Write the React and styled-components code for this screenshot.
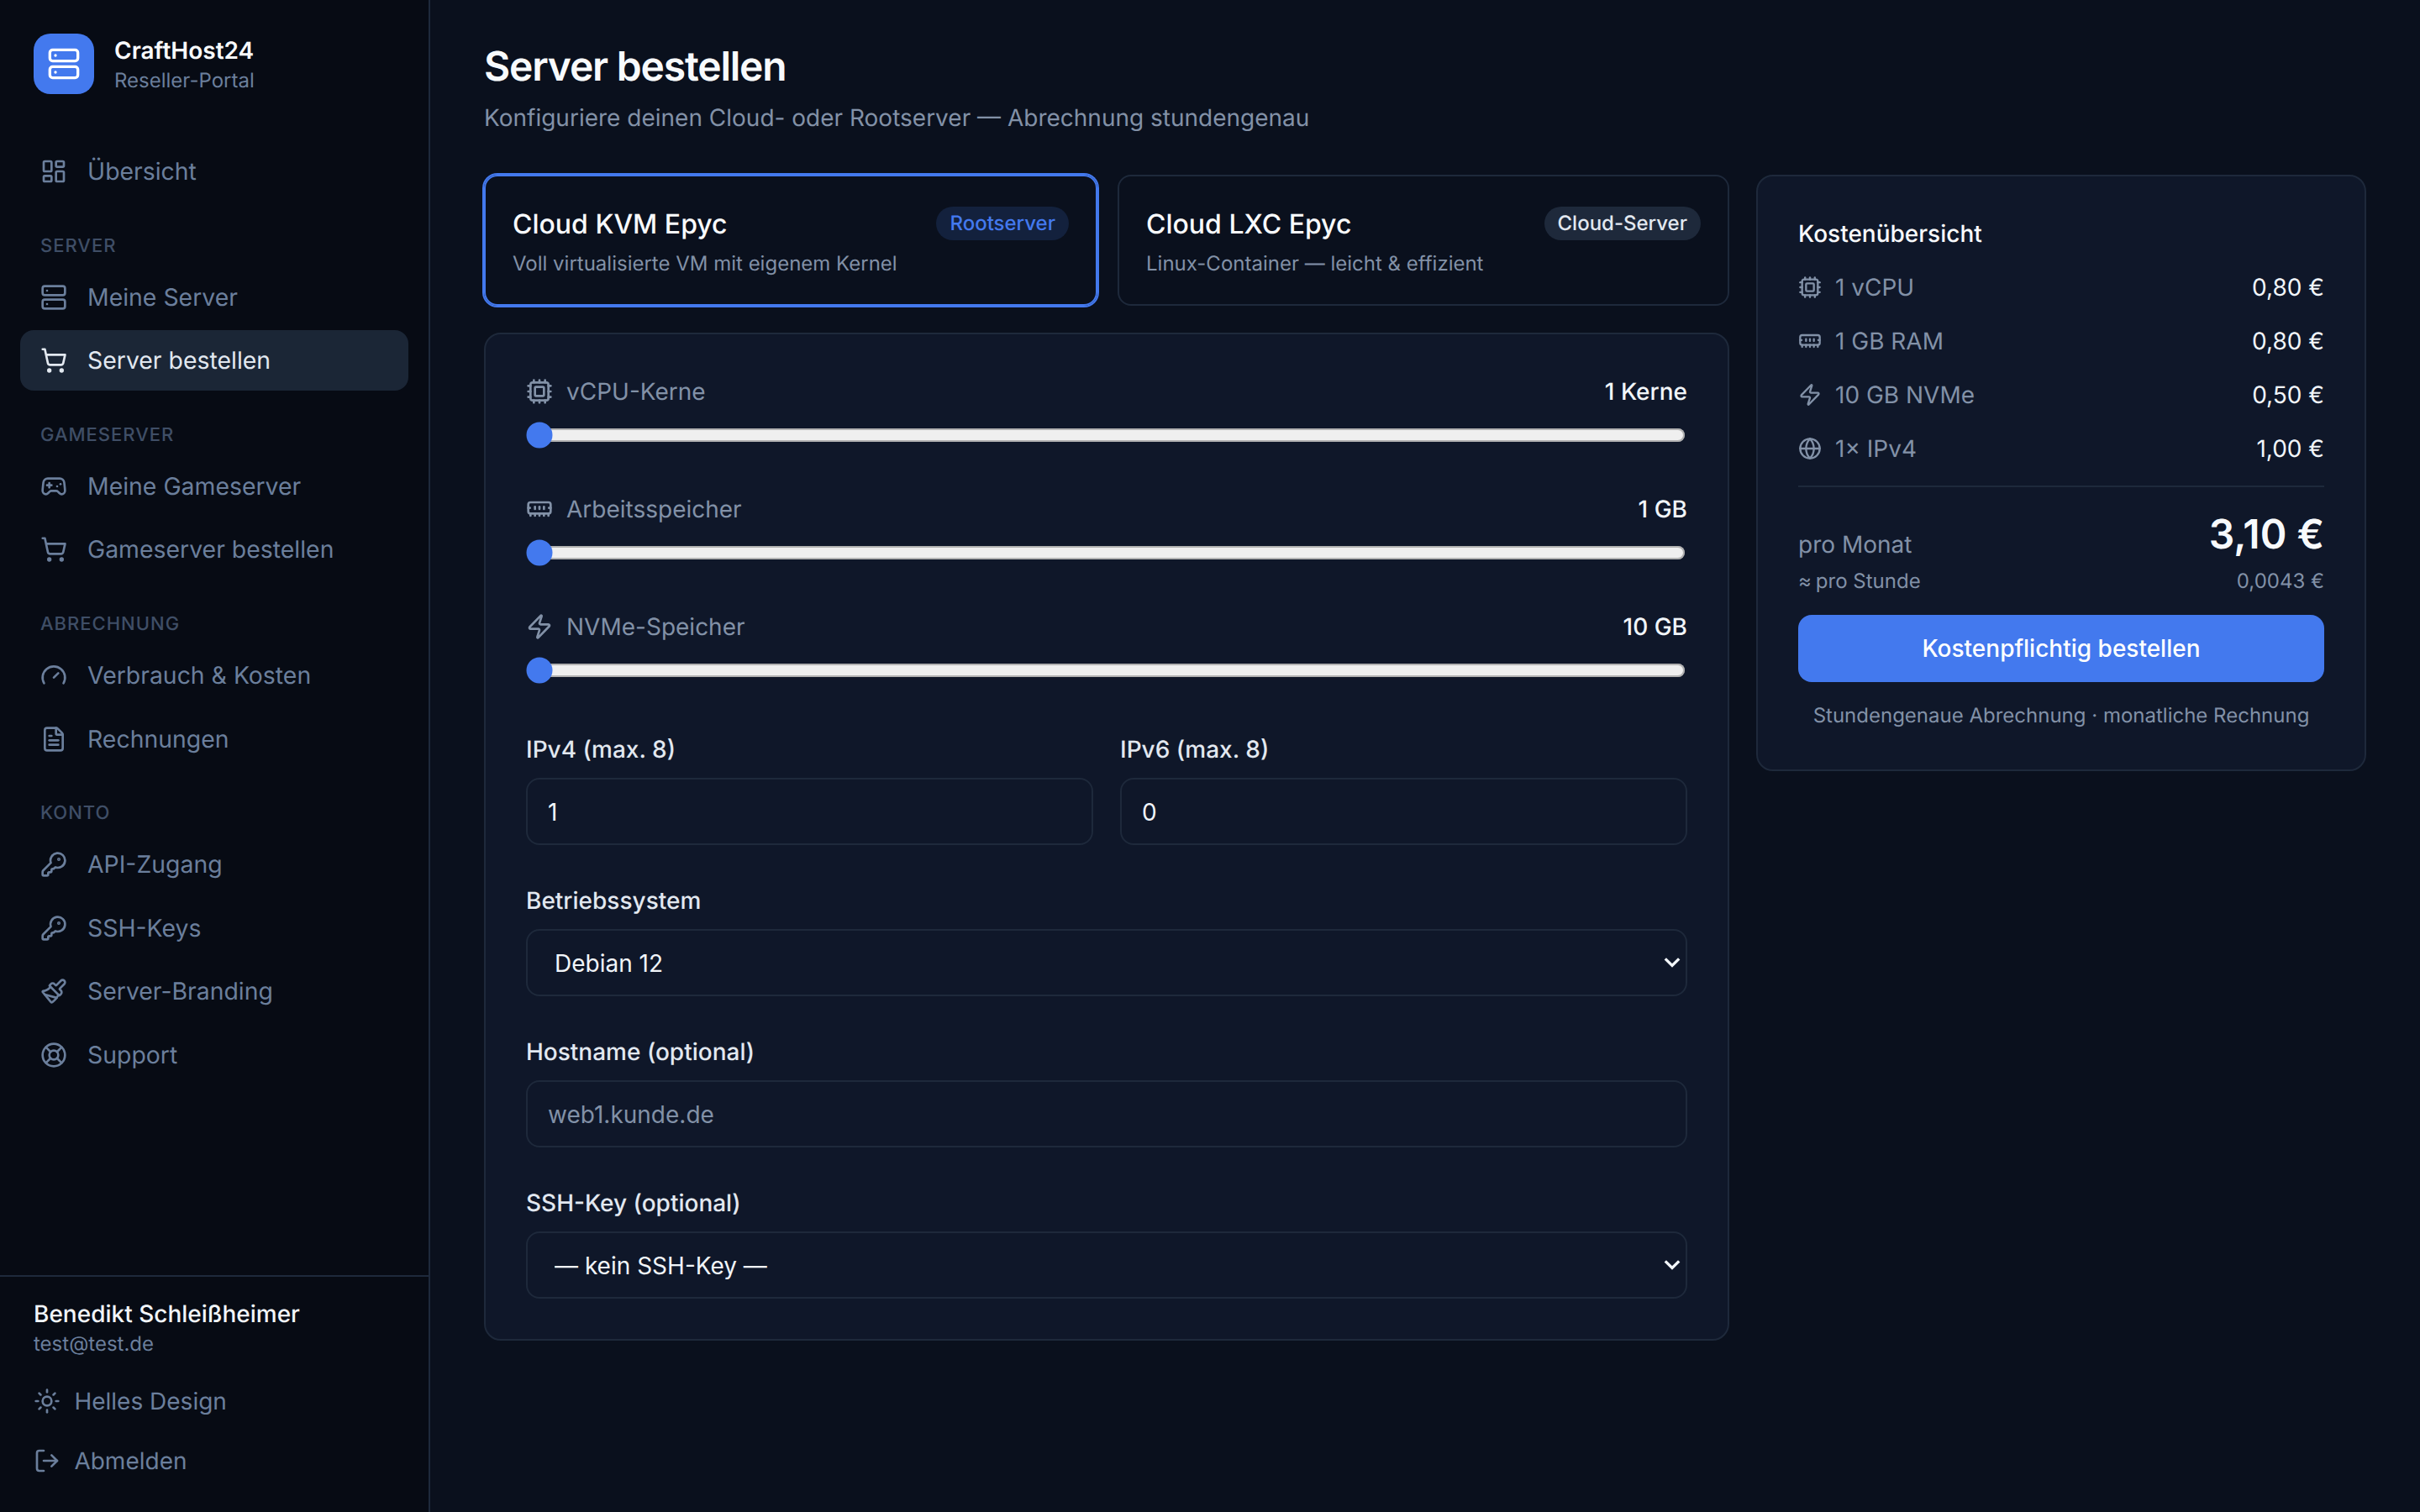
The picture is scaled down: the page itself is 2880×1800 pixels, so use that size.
import React from "react";
import styled, { createGlobalStyle } from "styled-components";
import {
  LayoutDashboard, Server, ShoppingCart, Gamepad2, Gauge, FileText, KeyRound, Paintbrush,
  LifeBuoy, Sun, LogOut, Cpu, MemoryStick, Zap, Globe,
} from "lucide-react";

const chevron =
  "data:image/svg+xml;utf8," +
  encodeURIComponent(
    '<svg xmlns="http://www.w3.org/2000/svg" width="10" height="7" viewBox="0 0 10 7"><path d="M.9 1.2l4.1 4 4.1-4" fill="none" stroke="#f1f5f9" stroke-width="1.7"/></svg>'
  );

const Global = createGlobalStyle`
  * { box-sizing: border-box; }
  html { zoom: 2; }
  html, body { margin: 0; padding: 0; background: #0a101d; }
  body { font-family: Inter, "Liberation Sans", sans-serif; font-size: 14px; line-height: 20px; color: #f1f5f9; text-rendering: geometricPrecision; -webkit-font-smoothing: antialiased; }
`;

const Shell = styled.div`
  display: flex;
  height: 900px;
  overflow: hidden;
`;
const Sidebar = styled.aside`
  width: 256px;
  flex: none;
  display: flex;
  flex-direction: column;
  background: #070b14;
  border-right: 1px solid #1e293b;
`;
const Brand = styled.div`
  display: flex;
  align-items: center;
  gap: 12px;
  padding: 20px 20px 0;
`;
const Logo = styled.div`
  width: 36px;
  height: 36px;
  border-radius: 10px;
  background: #4379ee;
  color: #fff;
  display: flex;
  align-items: center;
  justify-content: center;
`;
const BrandText = styled.div`
  display: flex;
  flex-direction: column;
`;
const BrandName = styled.span`
  font-size: 14px;
  line-height: 20px;
  font-weight: 600;
  color: #f8fafc;
`;
const BrandSub = styled.span`
  font-size: 12px;
  line-height: 16px;
  color: #6b7f9c;
`;
const Nav = styled.nav`
  flex: 1;
  padding: 28.1px 12px 0;
  display: flex;
  flex-direction: column;
  gap: 2px;
`;
const Section = styled.div`
  font-size: 11px;
  line-height: 16px;
  font-weight: 500;
  letter-spacing: 0.5px;
  color: #3f4e66;
  padding-left: 12px;
  margin: 16.5px 0 2.5px;
`;
const Item = styled.a`
  display: flex;
  align-items: center;
  gap: 12px;
  height: 35.8px;
  padding: 0 12px;
  border-radius: 8px;
  font-size: 14.2px;
  color: ${(p) => (p.$active ? "#e2e8f0" : "#6b7f9c")};
  background: ${(p) => (p.$active ? "#1b2636" : "transparent")};
  svg { flex: none; }
`;
const Foot = styled.div`
  border-top: 1px solid #1e293b;
  padding: 12px 20px 0;
  height: 141px;
  flex: none;
`;
const UserName = styled.div`
  font-size: 14px;
  line-height: 20px;
  font-weight: 500;
  color: #f1f5f9;
`;
const UserMail = styled.div`
  font-size: 12px;
  line-height: 16px;
  color: #6b7f9c;
`;
const FootActions = styled.div`
  margin-top: 8px;
  display: flex;
  flex-direction: column;
`;
const FootAction = styled.a`
  display: flex;
  align-items: center;
  gap: 8.2px;
  height: 35.8px;
  font-size: 14px;
  color: #6b7f9c;
`;
const Main = styled.main`
  flex: 1;
  min-width: 0;
  padding: 24px 32px;
`;
const Title = styled.h1`
  margin: 0;
  font-size: 24px;
  line-height: 31px;
  font-weight: 600;
  letter-spacing: -0.6px;
  color: #f8fafc;
`;
const Subtitle = styled.p`
  margin: 5px 0 0;
  font-size: 14px;
  line-height: 20px;
  color: #8291a7;
`;
const Columns = styled.div`
  margin-top: 24px;
  display: grid;
  grid-template-columns: 741px 363px;
  gap: 16px;
  align-items: start;
`;
const LeftCol = styled.div`
  display: flex;
  flex-direction: column;
  gap: 16px;
`;
const Tiles = styled.div`
  display: grid;
  grid-template-columns: 365px 364px;
  gap: 12px;
`;
const Tile = styled.div`
  height: 78px;
  padding: 16px;
  border-radius: 8px;
  border: 1px solid ${(p) => (p.$active ? "#4379ee" : "#1e293b")};
  box-shadow: ${(p) => (p.$active ? "0 0 0 1px #4379ee" : "none")};
`;
const TileHead = styled.div`
  display: flex;
  justify-content: space-between;
  align-items: flex-start;
`;
const TileName = styled.span`
  font-size: 16px;
  line-height: 24px;
  font-weight: 500;
  color: #f8fafc;
  padding-top: 0.5px;
`;
const Badge = styled.span`
  height: 20px;
  margin-top: 2px;
  padding: 0 8px;
  border-radius: 10px;
  font-size: 12px;
  line-height: 20px;
  font-weight: 500;
  background: ${(p) => (p.$blue ? "#13213d" : "#1e293b")};
  color: ${(p) => (p.$blue ? "#4379ee" : "#e2e8f0")};
`;
const TileDesc = styled.div`
  margin-top: 3.5px;
  font-size: 12px;
  line-height: 16px;
  color: #8291a7;
`;
const Card = styled.section`
  background: #0f1729;
  border: 1px solid #1e293b;
  border-radius: 10px;
  padding: 24px;
`;
const SliderBlock = styled.div`
  margin-bottom: 26px;
`;
const SliderHead = styled.div`
  display: flex;
  justify-content: space-between;
  align-items: center;
  height: 20px;
  margin-bottom: 8px;
`;
const SliderLabel = styled.span`
  display: flex;
  align-items: center;
  gap: 8px;
  color: #8291a7;
`;
const SliderValue = styled.span`
  font-weight: 500;
  color: #f1f5f9;
`;
const Range = styled.input`
  display: block;
  width: calc(100% - 1px);
  margin: 0;
  accent-color: #4379ee;
`;
const FieldRow = styled.div`
  display: grid;
  grid-template-columns: 1fr 1fr;
  gap: 16px;
  padding-top: 2.8px;
`;
const Field = styled.div`
  margin-top: ${(p) => p.$top ?? 22.8}px;
`;
const Label = styled.label`
  display: block;
  font-size: 14px;
  line-height: 20px;
  font-weight: 500;
  color: #e2e8f0;
  margin-bottom: 7.2px;
`;
const TextInput = styled.input`
  display: block;
  width: 100%;
  height: 40px;
  padding: 1px 12px 0;
  border: 1px solid #1e293b;
  border-radius: 8px;
  background: #0f1729;
  font: inherit;
  color: #f1f5f9;
  outline: none;
  &::placeholder { color: #8291a7; }
`;
const Select = styled.select`
  display: block;
  width: 100%;
  height: 40px;
  padding: 1px 16px 0;
  border: 1px solid #1e293b;
  border-radius: 8px;
  appearance: none;
  background: #0f1729 url("${chevron}") no-repeat right 3px center;
  font: inherit;
  color: #f1f5f9;
  outline: none;
`;
const Cost = styled.section`
  background: #0f1729;
  border: 1px solid #1e293b;
  border-radius: 10px;
  padding: 24px;
  height: 355px;
`;
const CostTitle = styled.h2`
  margin: 0 0 6px;
  font-size: 14px;
  line-height: 20px;
  font-weight: 500;
  color: #f8fafc;
`;
const CostRow = styled.div`
  display: flex;
  justify-content: space-between;
  align-items: center;
  height: 32px;
`;
const CostLabel = styled.span`
  display: flex;
  align-items: center;
  gap: 8px;
  color: #8291a7;
`;
const CostValue = styled.span`
  color: #f1f5f9;
`;
const Divider = styled.hr`
  border: 0;
  border-top: 1px solid #1e293b;
  margin: 6px 0 12px;
`;
const TotalRow = styled.div`
  display: flex;
  justify-content: space-between;
  align-items: flex-end;
`;
const TotalLabel = styled.span`
  color: #8291a7;
`;
const TotalPrice = styled.span`
  font-size: 24px;
  line-height: 32px;
  font-weight: 600;
  color: #f8fafc;
`;
const HourRow = styled.div`
  display: flex;
  justify-content: space-between;
  font-size: 12px;
  line-height: 16px;
  color: #8291a7;
  margin-top: 4px;
`;
const Approx = styled.span`
  letter-spacing: -0.9px;
`;
const Order = styled.button`
  display: block;
  width: 100%;
  height: 40px;
  margin-top: 12px;
  border: 0;
  border-radius: 8px;
  background: #4379ee;
  color: #fff;
  font: inherit;
  font-weight: 500;
`;
const CostNote = styled.p`
  margin: 12px 0 0;
  text-align: center;
  font-size: 12px;
  line-height: 16px;
  color: #8291a7;
`;

const groups = [
  { items: [["Übersicht", LayoutDashboard]] },
  { title: "SERVER", items: [["Meine Server", Server], ["Server bestellen", ShoppingCart, true]] },
  { title: "GAMESERVER", items: [["Meine Gameserver", Gamepad2], ["Gameserver bestellen", ShoppingCart]] },
  { title: "ABRECHNUNG", items: [["Verbrauch & Kosten", Gauge], ["Rechnungen", FileText]] },
  { title: "KONTO", items: [["API-Zugang", KeyRound], ["SSH-Keys", KeyRound], ["Server-Branding", Paintbrush], ["Support", LifeBuoy]] },
];
const sliders = [
  ["vCPU-Kerne", Cpu, "1 Kerne", 1, 32],
  ["Arbeitsspeicher", MemoryStick, "1 GB", 1, 64],
  ["NVMe-Speicher", Zap, "10 GB", 10, 500],
];
const costs = [
  ["1 vCPU", Cpu, "0,80 €"],
  ["1 GB RAM", MemoryStick, "0,80 €"],
  ["10 GB NVMe", Zap, "0,50 €"],
  ["1× IPv4", Globe, "1,00 €"],
];

export default function App() {
  return (
    <Shell>
      <Global />
      <Sidebar>
        <Brand>
          <Logo><Server size={20} /></Logo>
          <BrandText>
            <BrandName>CraftHost24</BrandName>
            <BrandSub>Reseller-Portal</BrandSub>
          </BrandText>
        </Brand>
        <Nav>
          {groups.map((g, i) => (
            <React.Fragment key={i}>
              {g.title && <Section>{g.title}</Section>}
              {g.items.map(([t, C, a]) => (
                <Item key={t} $active={a}><C size={16} />{t}</Item>
              ))}
            </React.Fragment>
          ))}
        </Nav>
        <Foot>
          <UserName>Benedikt Schleißheimer</UserName>
          <UserMail>test@test.de</UserMail>
          <FootActions>
            <FootAction><Sun size={16} />Helles Design</FootAction>
            <FootAction><LogOut size={16} />Abmelden</FootAction>
          </FootActions>
        </Foot>
      </Sidebar>
      <Main>
        <Title>Server bestellen</Title>
        <Subtitle>Konfiguriere deinen Cloud- oder Rootserver — Abrechnung stundengenau</Subtitle>
        <Columns>
          <LeftCol>
            <Tiles>
              <Tile $active>
                <TileHead><TileName>Cloud KVM Epyc</TileName><Badge $blue>Rootserver</Badge></TileHead>
                <TileDesc>Voll virtualisierte VM mit eigenem Kernel</TileDesc>
              </Tile>
              <Tile>
                <TileHead><TileName>Cloud LXC Epyc</TileName><Badge>Cloud-Server</Badge></TileHead>
                <TileDesc>Linux-Container — leicht &amp; effizient</TileDesc>
              </Tile>
            </Tiles>
            <Card>
              {sliders.map(([t, C, v, min, max]) => (
                <SliderBlock key={t}>
                  <SliderHead>
                    <SliderLabel><C size={16} />{t}</SliderLabel>
                    <SliderValue>{v}</SliderValue>
                  </SliderHead>
                  <Range type="range" min={min} max={max} defaultValue={min} />
                </SliderBlock>
              ))}
              <FieldRow>
                <Field $top={0}>
                  <Label>IPv4 (max. 8)</Label>
                  <TextInput type="text" defaultValue="1" />
                </Field>
                <Field $top={0}>
                  <Label>IPv6 (max. 8)</Label>
                  <TextInput type="text" defaultValue="0" />
                </Field>
              </FieldRow>
              <Field>
                <Label>Betriebssystem</Label>
                <Select defaultValue="Debian 12"><option>Debian 12</option></Select>
              </Field>
              <Field>
                <Label>Hostname (optional)</Label>
                <TextInput type="text" placeholder="web1.kunde.de" />
              </Field>
              <Field>
                <Label>SSH-Key (optional)</Label>
                <Select defaultValue="— kein SSH-Key —"><option>— kein SSH-Key —</option></Select>
              </Field>
            </Card>
          </LeftCol>
          <Cost>
            <CostTitle>Kostenübersicht</CostTitle>
            {costs.map(([t, C, v]) => (
              <CostRow key={t}>
                <CostLabel><C size={14} />{t}</CostLabel>
                <CostValue>{v}</CostValue>
              </CostRow>
            ))}
            <Divider />
            <TotalRow><TotalLabel>pro Monat</TotalLabel><TotalPrice>3,10 €</TotalPrice></TotalRow>
            <HourRow><span><Approx>≈</Approx> pro Stunde</span><span>0,0043 €</span></HourRow>
            <Order>Kostenpflichtig bestellen</Order>
            <CostNote>Stundengenaue Abrechnung · monatliche Rechnung</CostNote>
          </Cost>
        </Columns>
      </Main>
    </Shell>
  );
}
